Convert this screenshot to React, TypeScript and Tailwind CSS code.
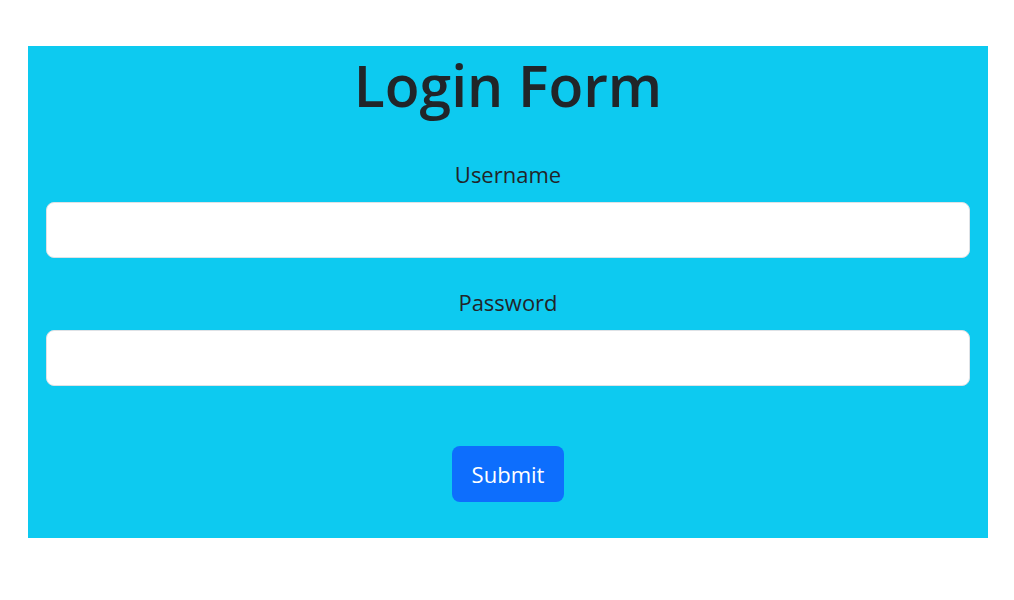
import { useState } from "react";

function App() {
  const [username, setUsername] = useState<string>('');
  const [password, setPassword] = useState<string>('');

  function onSubmit(e: React.FormEvent<HTMLFormElement>) {
    e.preventDefault();
  }

  return (
    <div className="w-full min-h-[600px] bg-white pt-[46px] pl-[28px]" style={{ fontFamily: '"Open Sans", "Noto Sans", sans-serif' }}>
      <form onSubmit={onSubmit} className="w-[960px] h-[492px] bg-[#0dcaf0] px-[18px] flex flex-col items-center text-[#212529]">
        <h1 className="text-[57px] leading-[70px] font-semibold mt-[4px]">Login Form</h1>
        <label htmlFor="username" className="text-[22px] leading-[30px] mt-[39px]">Username</label>
        <input
          id="username"
          value={username}
          onChange={(e) => setUsername(e.target.value)}
          className="w-full h-[56px] mt-[13px] bg-white border border-[#dee2e6] rounded-[8px] px-4 text-[20px] outline-none"
          type="text" />
        <label htmlFor="password" className="text-[22px] leading-[30px] mt-[29px]">Password</label>
        <input
          id="password"
          value={password}
          onChange={(e) => setPassword(e.target.value)}
          className="w-full h-[56px] mt-[13px] bg-white border border-[#dee2e6] rounded-[8px] px-4 text-[20px] outline-none"
          type="password" />
        <button type="submit" className="mt-[60px] h-[56px] px-[20px] bg-[#0d6efd] text-white text-[22px] rounded-[8px]">Submit</button>
      </form>
    </div>
  );
}

export default App;
